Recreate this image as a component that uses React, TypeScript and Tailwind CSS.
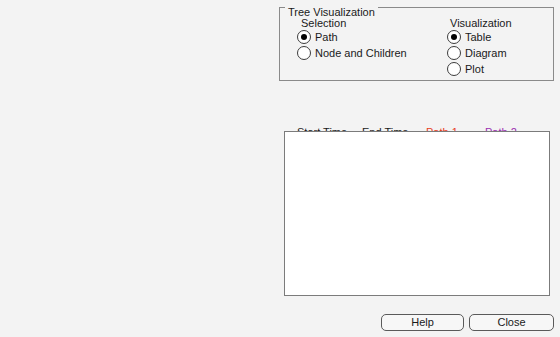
import { useState } from 'react'

const font = { fontFamily: '"Liberation Sans", Arial, sans-serif' }

function Radio({
  label,
  checked,
  onSelect,
}: {
  label: string
  checked: boolean
  onSelect: () => void
}) {
  return (
    <div className="flex h-[16px] cursor-default items-center" onClick={onSelect}>
      <span className="flex h-[14px] w-[14px] items-center justify-center rounded-full border border-[#3c3c3c] bg-white">
        {checked && <span className="h-[6px] w-[6px] rounded-full bg-black" />}
      </span>
      <span className="ml-[4px] text-[11px] leading-none text-[#1a1a1a]">{label}</span>
    </div>
  )
}

export default function App() {
  const [selection, setSelection] = useState('Path')
  const [viz, setViz] = useState('Table')

  return (
    <div className="h-[337px] w-[560px] overflow-hidden bg-[#f3f3f3]" style={font}>
      <div className="ml-[279px] flex w-[275px] flex-col pt-[7px]">
        {/* Tree Visualization group */}
        <div className="relative h-[74px] w-[275px] border border-[#8a8a8a] pl-[17px] pt-[10px]">
          <span className="absolute left-[5px] top-[-2px] bg-[#f3f3f3] px-[3px] text-[11px] leading-[12px] text-[#1a1a1a]">
            Tree Visualization
          </span>
          <div className="flex">
            <div className="flex w-[150px] flex-col">
              <div className="ml-[4px] h-[11px] text-[11px] leading-[11px] text-[#1a1a1a]">Selection</div>
              {['Path', 'Node and Children'].map((s) => (
                <Radio key={s} label={s} checked={selection === s} onSelect={() => setSelection(s)} />
              ))}
            </div>
            <div className="flex flex-col">
              <div className="ml-[3px] h-[11px] text-[11px] leading-[11px] text-[#1a1a1a]">Visualization</div>
              {['Table', 'Diagram', 'Plot'].map((s) => (
                <Radio key={s} label={s} checked={viz === s} onSelect={() => setViz(s)} />
              ))}
            </div>
          </div>
        </div>

        {/* table */}
        <div className="ml-[5px] mt-[45px] flex flex-col">
          <div className="flex h-[12px] text-[11px] leading-[12px]">
            <span className="ml-[13px] w-[65px] text-[#1a1a1a]">Start Time</span>
            <span className="w-[64px] text-[#1a1a1a]">End Time</span>
            <span className="w-[59px] text-[#e8401c]">Path 1</span>
            <span className="text-[#9a2fb0]">Path 2</span>
          </div>
          <div className="relative -mt-[7px] h-[165px] w-[266px] border border-[#7b7b7b] bg-white" />
        </div>

        {/* buttons */}
        <div className="ml-[102px] mt-[18px] flex gap-[5px]">
          <button className="h-[17px] w-[84px] rounded-[5px] border border-[#5a5a5a] bg-[#f7f7f7] text-[11px] leading-none text-[#1a1a1a]">
            Help
          </button>
          <button className="h-[17px] w-[86px] rounded-[5px] border border-[#5a5a5a] bg-[#f7f7f7] text-[11px] leading-none text-[#1a1a1a]">
            Close
          </button>
        </div>
      </div>
    </div>
  )
}
